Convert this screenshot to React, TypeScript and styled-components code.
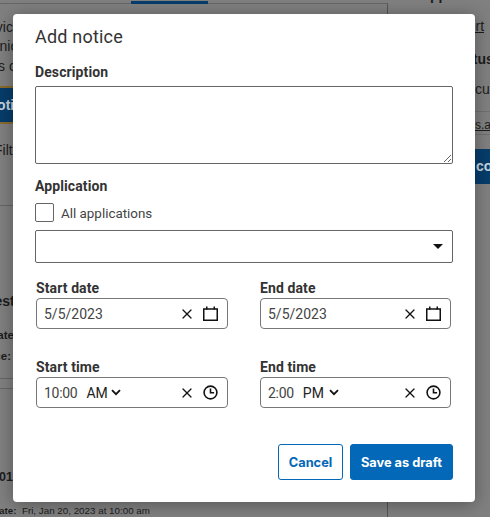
import styled, { createGlobalStyle } from "styled-components";
import { X } from "lucide-react";

const GlobalStyle = createGlobalStyle`
  html, body {
    margin: 0;
    padding: 0;
    height: 100%;
    overflow: hidden;
    background: #808080;
  }
`;

// page behind the dialog
const Page = styled.div`
  width: 490px;
  height: 517px;
  overflow: hidden;
  position: relative;
  display: grid;
  grid-template-columns: 388px 102px;
  background: #808080;
  color: #1c1c1c;
  font-family: "Liberation Sans", Arial, sans-serif;
  font-size: 14px;
`;

const MainColumn = styled.div`
  border-right: 1px solid #555;
  margin-top: 3px;
  border-top: 1px solid #666;
  position: relative;
  display: flex;
  flex-direction: column;
`;

const SideColumn = styled.div`
  display: flex;
  flex-direction: column;
  padding-left: 30px;
`;

const TopTab = styled.div`
  position: absolute;
  left: 131px;
  top: -3px;
  width: 77px;
  height: 3px;
  background: #063d6b;
`;

const PageText = styled.div<{ $top: number; $left?: number; $bold?: boolean; $size?: number }>`
  margin-top: ${(p) => p.$top}px;
  margin-left: ${(p) => p.$left ?? 0}px;
  font-weight: ${(p) => (p.$bold ? 700 : 400)};
  font-size: ${(p) => p.$size ?? 14}px;
  line-height: 16px;
  white-space: nowrap;
`;

const PageButton = styled.div`
  box-sizing: border-box;
  margin-top: 12px;
  margin-left: -13px;
  width: 120px;
  height: 38px;
  background: #063d6b;
  border-top: 2px solid #8a6a2e;
  border-bottom: 2px solid #8a6a2e;
  color: #c9d6e0;
  font-weight: 700;
  line-height: 34px;
`;

const PageRule = styled.div<{ $top: number }>`
  margin-top: ${(p) => p.$top}px;
  border-top: 1px solid #666;
`;

const SideLink = styled(PageText)`
  text-decoration: underline;
`;

const SideButton = styled.div`
  box-sizing: border-box;
  margin-top: 14px;
  margin-left: 22px;
  height: 35px;
  width: 120px;
  padding-left: 36px;
  background: #063d6b;
  color: #c9d6e0;
  font-weight: 700;
  line-height: 35px;
`;

const Strip = styled.div`
  box-sizing: border-box;
  height: 24px;
  margin-top: 14px;
  margin-left: -30px;
  padding: 6px 0 0 87px;
  border-top: 1px solid #707070;
  border-bottom: 1px solid #707070;
  font-size: 12px;
  line-height: 14px;
  text-decoration: underline;
  white-space: nowrap;
`;

// dialog
const Dialog = styled.div`
  position: absolute;
  left: 13px;
  top: 14px;
  width: 462px;
  height: 488px;
  box-sizing: border-box;
  padding: 11px 22px 0;
  background: #fff;
  border-radius: 4px;
  box-shadow: 0 2px 18px rgba(0, 0, 0, 0.35);
  font-family: Roboto, "Liberation Sans", sans-serif;
  color: #333;
  display: flex;
  flex-direction: column;
`;

const Title = styled.h2`
  margin: 0;
  font-size: 18px;
  font-weight: 400;
  line-height: 23px;
  letter-spacing: 0.2px;
`;

const Label = styled.label`
  display: block;
  font-size: 14px;
  font-weight: 700;
  line-height: 18px;
  letter-spacing: 0.1px;
`;

const DescriptionLabel = styled(Label)`
  margin-top: 15px;
`;

const TextArea = styled.textarea`
  display: block;
  box-sizing: border-box;
  width: 100%;
  height: 78px;
  margin: 5px 0 0;
  border: 1px solid #666;
  border-radius: 2px;
  background: #fff;
  outline: none;
`;

const AppLabel = styled(Label)`
  margin-top: 13px;
`;

const CheckRow = styled.div`
  display: flex;
  align-items: center;
  gap: 7px;
  margin-top: 8px;
  height: 19px;
  font-size: 13.4px;
  color: #444;
`;

const CheckText = styled.span`
  margin-top: 2px;
`;

const CheckBox = styled.span`
  box-sizing: border-box;
  width: 19px;
  height: 19px;
  border: 1px solid #666;
  border-radius: 2px;
`;

const SelectBox = styled.div`
  box-sizing: border-box;
  width: 100%;
  height: 33px;
  margin-top: 8px;
  padding-right: 9px;
  border: 1px solid #666;
  border-radius: 2px;
  display: flex;
  align-items: center;
  justify-content: flex-end;
`;

const Caret = styled.span`
  width: 0;
  height: 0;
  border-left: 5px solid transparent;
  border-right: 5px solid transparent;
  border-top: 5px solid #111;
`;

const FieldGrid = styled.div`
  display: grid;
  grid-template-columns: 192px 191px;
  column-gap: 32px;
  row-gap: 30px;
  margin-top: 17px;
  padding-left: 1px;
`;

const Field = styled.div`
  display: flex;
  flex-direction: column;
`;

const FieldLabel = styled(Label)`
  line-height: 17px;
`;

const InputBox = styled.div`
  box-sizing: border-box;
  height: 31px;
  margin-top: 1px;
  padding: 0 9px 0 7px;
  border: 1px solid #777;
  border-radius: 4px;
  display: flex;
  align-items: center;
  font-size: 14px;
  color: #444;
`;

const DateValue = styled.span`
  white-space: nowrap;
`;

const TimeValue = styled.span`
  letter-spacing: -0.3px;
  white-space: nowrap;
`;

const Meridiem = styled.span<{ $gap: number }>`
  margin-left: 9px;
  display: inline-flex;
  align-items: center;
  gap: ${(p) => p.$gap}px;
  color: #222;
`;

const Icons = styled.span`
  margin-left: auto;
  display: flex;
  align-items: center;
  gap: 8px;
  color: #111;
`;

const Footer = styled.div`
  display: flex;
  justify-content: flex-end;
  gap: 7px;
  margin-top: 36px;
`;

const BaseButton = styled.button`
  box-sizing: border-box;
  height: 36px;
  border-radius: 3px;
  font-family: Inter, "Liberation Sans", sans-serif;
  font-size: 12.8px;
  font-weight: 700;
  padding: 0;
`;

const CancelButton = styled(BaseButton)`
  width: 65px;
  background: #fff;
  border: 1px solid #0468b8;
  color: #0468b8;
`;

const DraftButton = styled(BaseButton)`
  width: 103px;
  background: #0468b8;
  border: 1px solid #0468b8;
  color: #fff;
`;

const CalendarIcon = () => (
  <svg width="15" height="15" viewBox="0 0 15 15" fill="none" stroke="#111" strokeWidth="1.5">
    <path d="M0.75 3h13.5v11.25H0.75z" />
    <path d="M3.75 0.5v3M11.25 0.5v3" />
  </svg>
);

const ClockIcon = () => (
  <svg width="15" height="15" viewBox="0 0 15 15" fill="none" stroke="#111" strokeWidth="1.6">
    <circle cx="7.5" cy="7.5" r="6.4" />
    <path d="M7.5 3.6v4.2h3.6" />
  </svg>
);

const ChevronIcon = () => (
  <svg width="10" height="7" viewBox="0 0 10 7" fill="none" stroke="#111" strokeWidth="1.8">
    <path d="M1 1.2l4 4 4-4" />
  </svg>
);

function FieldIcons({ clock }: { clock?: boolean }) {
  return (
    <Icons>
      <X size={16} strokeWidth={1.8} />
      {clock ? <ClockIcon /> : <CalendarIcon />}
    </Icons>
  );
}

export default function App() {
  return (
    <>
      <GlobalStyle />
      <Page>
        <MainColumn>
          <TopTab />
          <PageText $top={15} $left={-26}>Service</PageText>
          <PageText $top={3} $left={-30}>Technical</PageText>
          <PageText $top={4} $left={-5}>is on</PageText>
          <PageButton>Notice</PageButton>
          <PageText $top={18} $left={-6}>Filter</PageText>
          <PageRule $top={47} />
          <PageText $top={87} $left={-13} $bold>Test</PageText>
          <PageText $top={18} $left={-11} $bold $size={11.5}>Date</PageText>
          <PageText $top={5} $left={-28} $bold $size={11.5}>Notice:</PageText>
          <PageRule $top={14} />
          <PageRule $top={9} />
          <PageText $top={80} $left={-1} $bold $size={12.5}>01</PageText>
          <PageText $top={18} $left={-8} $size={9.8}><b>Date:</b>&nbsp; Fri, Jan 20, 2023 at 10:00 am</PageText>
        </MainColumn>
        <SideColumn>
          <PageText $top={-13} $left={12} $bold>pp</PageText>
          <SideLink $top={15} $left={17}>Support</SideLink>
          <PageText $top={17} $left={33} $bold>Status</PageText>
          <PageText $top={14} $left={40}>Secure</PageText>
          <Strip>s.access</Strip>
          <SideButton>con</SideButton>
        </SideColumn>
        <Dialog>
          <Title>Add notice</Title>
          <DescriptionLabel>Description</DescriptionLabel>
          <TextArea />
          <AppLabel>Application</AppLabel>
          <CheckRow>
            <CheckBox />
            <CheckText>All applications</CheckText>
          </CheckRow>
          <SelectBox>
            <Caret />
          </SelectBox>
          <FieldGrid>
            <Field>
              <FieldLabel>Start date</FieldLabel>
              <InputBox>
                <DateValue>5/5/2023</DateValue>
                <FieldIcons />
              </InputBox>
            </Field>
            <Field>
              <FieldLabel>End date</FieldLabel>
              <InputBox>
                <DateValue>5/5/2023</DateValue>
                <FieldIcons />
              </InputBox>
            </Field>
            <Field>
              <FieldLabel>Start time</FieldLabel>
              <InputBox>
                <TimeValue>10:00</TimeValue>
                <Meridiem $gap={3}>AM <ChevronIcon /></Meridiem>
                <FieldIcons clock />
              </InputBox>
            </Field>
            <Field>
              <FieldLabel>End time</FieldLabel>
              <InputBox>
                <TimeValue>2:00</TimeValue>
                <Meridiem $gap={5}>PM <ChevronIcon /></Meridiem>
                <FieldIcons clock />
              </InputBox>
            </Field>
          </FieldGrid>
          <Footer>
            <CancelButton>Cancel</CancelButton>
            <DraftButton>Save as draft</DraftButton>
          </Footer>
        </Dialog>
      </Page>
    </>
  );
}
